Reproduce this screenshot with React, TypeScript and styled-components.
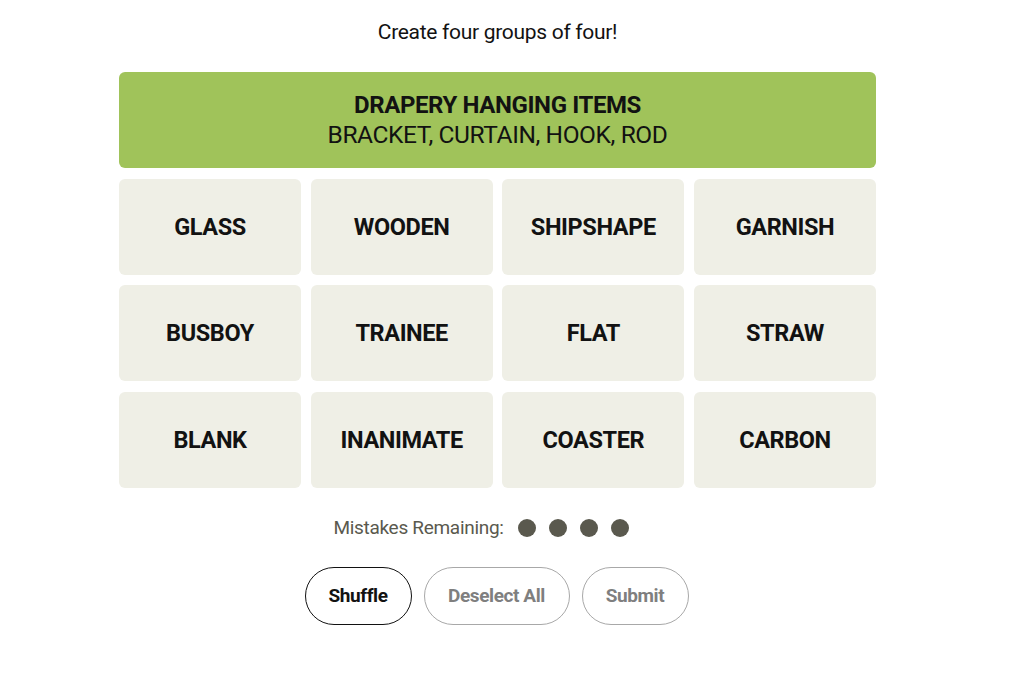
import React from "react";
import styled, { createGlobalStyle } from "styled-components";

const Global = createGlobalStyle`
  html, body { margin: 0; padding: 0; background: #ffffff; }
  body { font-family: "Roboto", "Liberation Sans", sans-serif; color: #121212; }
`;

const Page = styled.div`
  width: 1024px;
  height: 675px;
  display: flex;
  flex-direction: column;
  align-items: center;
  padding-top: 19px;
  box-sizing: border-box;
`;

const Inner = styled.div`
  width: 757px;
  margin-left: -29px;
  display: flex;
  flex-direction: column;
  align-items: center;
`;

const Prompt = styled.p`
  margin: 0 0 27px;
  height: 26px;
  font-size: 21px;
  line-height: 26px;
  font-weight: 400;
  letter-spacing: -0.3px;
`;

const Board = styled.div`
  width: 757px;
  display: grid;
  grid-template-columns: repeat(4, 1fr);
  grid-auto-rows: 96px;
  gap: 10.6px 9.6px;
`;

const Solved = styled.div`
  grid-column: 1 / -1;
  background: #a0c35a;
  border-radius: 6px;
  display: flex;
  flex-direction: column;
  align-items: center;
  justify-content: center;
  font-size: 24px;
  line-height: 29px;
  letter-spacing: -0.4px;
`;

const SolvedTitle = styled.div`
  font-weight: 700;
`;

const SolvedWords = styled.div`
  font-weight: 400;
  font-size: 24.5px;
`;

const Tile = styled.div`
  background: #efefe6;
  border-radius: 6px;
  display: flex;
  align-items: center;
  justify-content: center;
  font-weight: 700;
  font-size: 23.5px;
  letter-spacing: -0.4px;
  text-transform: uppercase;
`;

const Mistakes = styled.div`
  display: flex;
  align-items: center;
  margin-top: 29px;
  margin-right: 33px;
  font-size: 19px;
  line-height: 22px;
  color: #5a594e;
  letter-spacing: -0.3px;
`;

const Dots = styled.div`
  display: flex;
  gap: 13px;
  margin-left: 14px;
`;

const Dot = styled.span`
  width: 18px;
  height: 18px;
  border-radius: 50%;
  background: #5a594e;
`;

const Buttons = styled.div`
  display: flex;
  gap: 12px;
  margin-top: 28px;
  margin-right: 2px;
`;

const Button = styled.button<{ $active?: boolean; $w: number }>`
  width: ${(p) => p.$w}px;
  height: 58px;
  border-radius: 29px;
  background: #fff;
  border: 1px solid ${(p) => (p.$active ? "#121212" : "#a8a8a8")};
  color: ${(p) => (p.$active ? "#121212" : "#7f7f7f")};
  font-family: "Roboto", "Liberation Sans", sans-serif;
  font-weight: 700;
  font-size: 19px;
  letter-spacing: -0.4px;
  padding: 0;
`;

const words = [
  "Glass", "Wooden", "Shipshape", "Garnish",
  "Busboy", "Trainee", "Flat", "Straw",
  "Blank", "Inanimate", "Coaster", "Carbon",
];

export default function App() {
  return (
    <Page>
      <Global />
      <Inner>
        <Prompt>Create four groups of four!</Prompt>
        <Board>
          <Solved>
            <SolvedTitle>DRAPERY HANGING ITEMS</SolvedTitle>
            <SolvedWords>BRACKET, CURTAIN, HOOK, ROD</SolvedWords>
          </Solved>
          {words.map((w) => (
            <Tile key={w}>{w}</Tile>
          ))}
        </Board>
        <Mistakes>
          Mistakes Remaining:
          <Dots>
            <Dot />
            <Dot />
            <Dot />
            <Dot />
          </Dots>
        </Mistakes>
        <Buttons>
          <Button $active $w={107}>Shuffle</Button>
          <Button $w={146}>Deselect All</Button>
          <Button $w={107}>Submit</Button>
        </Buttons>
      </Inner>
    </Page>
  );
}
